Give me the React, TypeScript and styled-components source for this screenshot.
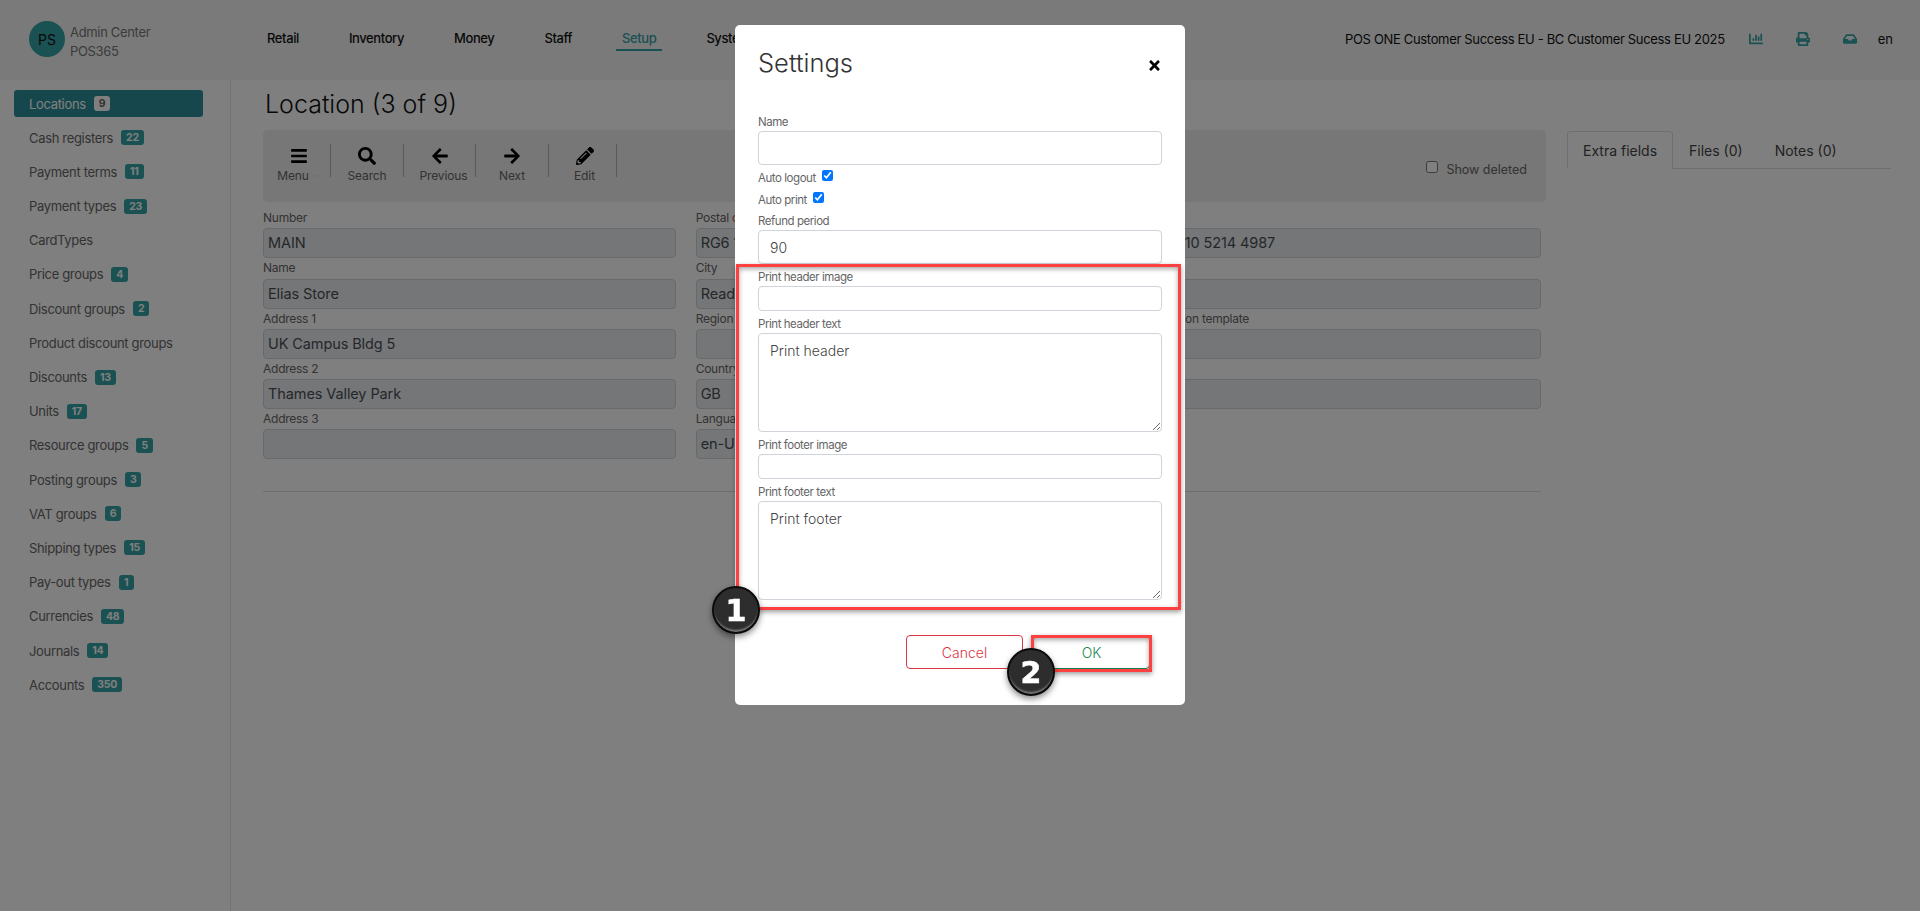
import React from "react";
import styled, { createGlobalStyle } from "styled-components";
import {
  FaBars,
  FaSearch,
  FaArrowLeft,
  FaArrowRight,
  FaPencilAlt,
  FaChartBar,
  FaPrint,
  FaInbox,
  FaTimes,
} from "react-icons/fa";

const TEAL = "#34a2a5";
const FONT = `Inter, "Liberation Sans", sans-serif`;

const Global = createGlobalStyle`
  html, body { margin: 0; height: 100%; background: #fff; overflow: hidden; }
  body { font-family: ${FONT}; font-size: 13px; color: #222; }
  * { box-sizing: border-box; }
`;

const Page = styled.div`
  width: 1920px;
  height: 911px;
  display: flex;
  flex-direction: column;
`;

const Header = styled.header`
  height: 80px;
  flex: none;
  background: #f5f5f5;
  display: flex;
  align-items: center;
  padding: 0 27px 2px 29px;
`;

const Brand = styled.div`
  display: flex;
  align-items: center;
  gap: 5px;
  width: 232px;
`;

const Avatar = styled.div`
  width: 36px;
  height: 36px;
  border-radius: 50%;
  background: ${TEAL};
  color: #111;
  font-size: 14px;
  display: flex;
  align-items: center;
  justify-content: center;
`;

const BrandText = styled.div`
  color: #777;
  font-size: 13px;
  line-height: 19px;
  letter-spacing: -0.33px;
  padding-top: 5px;
`;

const Nav = styled.nav`
  display: flex;
  gap: 38px;
`;

const NavItem = styled.a<{ $active?: boolean }>`
  padding: 0 6px;
  height: 22px;
  line-height: 18px;
  margin-top: 2px;
  font-size: 13px;
  font-weight: 500;
  letter-spacing: -0.4px;
  color: ${(p) => (p.$active ? TEAL : "#111")};
  border-bottom: 2px solid ${(p) => (p.$active ? TEAL : "transparent")};
`;

const HeaderRight = styled.div`
  margin-left: auto;
  display: flex;
  align-items: center;
  font-size: 13px;
  color: #111;
`;

const Org = styled.span`
  margin-right: 24px;
  letter-spacing: -0.33px;
`;

const TopIcon = styled.span<{ $gap: number }>`
  color: ${TEAL};
  display: flex;
  font-size: 14px;
  margin-right: ${(p) => p.$gap}px;
`;

const Body = styled.div`
  flex: 1;
  display: flex;
  min-height: 0;
`;

const Sidebar = styled.aside`
  width: 231px;
  flex: none;
  border-right: 1px solid #e4e4e4;
  padding: 10px 27px 0 14px;
  display: flex;
  flex-direction: column;
  gap: 7.2px;
`;

const SideItem = styled.a<{ $active?: boolean }>`
  height: 27px;
  flex: none;
  padding-left: 15px;
  border-radius: 3px;
  display: flex;
  align-items: center;
  gap: 8px;
  font-size: 13px;
  letter-spacing: -0.33px;
  color: ${(p) => (p.$active ? "#fff" : "#666")};
  background: ${(p) => (p.$active ? "#2c8f98" : "transparent")};
`;

const Badge = styled.span<{ $active?: boolean }>`
  height: 15px;
  min-width: 15px;
  padding: 0 5px;
  border-radius: 3px;
  font-size: 10.5px;
  font-weight: 700;
  line-height: 15px;
  text-align: center;
  letter-spacing: -0.3px;
  background: ${(p) => (p.$active ? "#fff" : TEAL)};
  color: ${(p) => (p.$active ? "#666" : "#fff")};
`;

const Content = styled.main`
  flex: none;
  width: 1283px;
  margin-left: 32px;
`;

const Title = styled.h1`
  margin: 0;
  height: 50px;
  line-height: 48px;
  font-size: 25px;
  font-weight: 300;
  color: #111;
  padding-left: 2px;
`;

const Toolbar = styled.div`
  height: 72px;
  background: #eeeeee;
  border-radius: 5px;
  display: flex;
  padding: 14px 19px 0 5px;
`;

const ToolButton = styled.div<{ $w: number; $pad?: number }>`
  width: ${(p) => p.$w}px;
  height: 33px;
  padding-left: ${(p) => p.$pad ?? 0}px;
  border-right: 1px solid #b5b5b5;
  display: flex;
  flex-direction: column;
  align-items: center;
  color: #111;
`;

const ToolIcon = styled.span`
  height: 23px;
  flex: none;
  display: flex;
  align-items: center;
  font-size: 18px;
  color: #000;
`;

const ToolLabel = styled.span<{ $shift?: number }>`
  font-size: 12px;
  line-height: 18px;
  letter-spacing: -0.1px;
  color: #666;
  white-space: nowrap;
  margin-left: ${(p) => p.$shift ?? 0}px;
  display: flex;
  flex: none;
  align-items: center;
`;

const Caret = styled.i`
  width: 8px;
  height: 0;
  margin-left: 4px;
  border-top: 3px solid #e6e6e6;
  border-left: 4px solid transparent;
  border-right: 4px solid transparent;
`;

const ShowDeleted = styled.label`
  margin-left: auto;
  margin-top: 15px;
  height: 20px;
  display: flex;
  align-items: center;
  gap: 8px;
  font-size: 12.5px;
  color: #666;
`;

const SmallCheck = styled.input`
  width: 12px;
  height: 12px;
  margin: -4px 0 0;
`;

const FormGrid = styled.div`
  margin: 6px 5px 0 0;
  display: grid;
  grid-template-columns: repeat(3, 1fr);
  column-gap: 20px;
  row-gap: 0;
`;

const RoField = styled.div``;

const RoLabel = styled.div`
  height: 20.25px;
  line-height: 20px;
  font-size: 12px;
  letter-spacing: -0.25px;
  color: #666;
  white-space: nowrap;
`;

const RoMark = styled.span`
  color: #c0533c;
`;

const RoInput = styled.div`
  height: 30px;
  border: 1px solid #ced4da;
  border-radius: 4px;
  background: #e9ecef;
  color: #495057;
  font-size: 14.5px;
  letter-spacing: -0.1px;
  line-height: 28px;
  padding: 0 4px;
  white-space: nowrap;
`;

const Rule = styled.hr`
  margin: 32px 5px 0 0;
  border: 0;
  border-top: 1px solid #ddd;
`;

const Side = styled.section`
  margin: 51px 0 0 21px;
  width: 324px;
  height: 38px;
  display: flex;
  border-bottom: 1px solid #ddd;
`;

const Tab = styled.a<{ $active?: boolean }>`
  height: 38px;
  padding: 0 15px;
  line-height: 38px;
  font-size: 14px;
  color: #444;
  border: 1px solid ${(p) => (p.$active ? "#ddd" : "transparent")};
  border-bottom-color: ${(p) => (p.$active ? "#fff" : "transparent")};
  border-radius: 4px 4px 0 0;
`;

const Overlay = styled.div`
  position: fixed;
  inset: 0;
  background: rgba(0, 0, 0, 0.5);
  display: flex;
  justify-content: center;
  align-items: flex-start;
  padding-top: 25px;
`;

const Modal = styled.div`
  position: relative;
  width: 450px;
  height: 680px;
  background: #fff;
  border-radius: 5px;
  padding: 0 23px;
  display: flex;
  flex-direction: column;
`;

const ModalHead = styled.div`
  height: 84px;
  display: flex;
  justify-content: space-between;
  flex: none;
`;

const ModalTitle = styled.h2`
  margin: 18px 0 0;
  font-size: 25.5px;
  line-height: 40px;
  font-weight: 300;
  color: #333;
`;

const Close = styled.button`
  margin: 33px 0 0 0;
  padding: 0;
  height: 16px;
  border: 0;
  background: transparent;
  color: #000;
  font-size: 15px;
  display: flex;
`;

const Field = styled.div`
  margin-top: 4px;
  flex: none;
`;

const Label = styled.label`
  display: block;
  height: 16px;
  line-height: 18px;
  margin-bottom: 2px;
  font-size: 11.5px;
  letter-spacing: -0.45px;
  color: #666;
`;

const TextInput = styled.input<{ $h: number }>`
  display: block;
  width: 100%;
  height: ${(p) => p.$h}px;
  padding: 0 11px;
  border: 1px solid #ced4da;
  border-radius: 4px;
  background: #fff;
  font-family: inherit;
  font-size: 14px;
  font-weight: 300;
  color: #444;
  outline: none;
`;

const TextArea = styled.textarea<{ $h: number }>`
  display: block;
  width: 100%;
  height: ${(p) => p.$h}px;
  padding: 6px 11px;
  border: 1px solid #ced4da;
  border-radius: 4px;
  font-family: inherit;
  font-size: 14px;
  font-weight: 300;
  line-height: 22px;
  color: #444;
  outline: none;
`;

const CheckRow = styled.label`
  display: flex;
  height: 16px;
  margin-top: 4px;
  margin-bottom: 1px;
  font-size: 11.5px;
  letter-spacing: -0.45px;
  line-height: 18px;
  color: #666;
  gap: 6px;
  & + & { margin-top: 5px; }
`;

const Check = styled.input`
  width: 11px;
  height: 11px;
  margin: 1px 0 0;
`;

const Footer = styled.div`
  margin-top: 35px;
  padding-right: 12px;
  display: flex;
  justify-content: flex-end;
  gap: 10px;
`;

const ActionButton = styled.button<{ $tone: string; $w: number }>`
  width: ${(p) => p.$w}px;
  height: 34px;
  background: #fff;
  border: 1px solid ${(p) => p.$tone};
  border-radius: 4px;
  color: ${(p) => p.$tone};
  font-family: inherit;
  font-size: 14px;
  font-weight: 300;
`;

const Highlight = styled.div<{ $x: number; $y: number; $w: number; $h: number }>`
  position: absolute;
  left: ${(p) => p.$x}px;
  top: ${(p) => p.$y}px;
  width: ${(p) => p.$w}px;
  height: ${(p) => p.$h}px;
  border: 3.5px solid #ff4040;
  pointer-events: none;
  box-shadow: 0 2px 5px rgba(0, 0, 0, 0.4), inset 0 2px 5px rgba(0, 0, 0, 0.35);
`;

const Step = styled.div<{ $x: number; $y: number }>`
  position: absolute;
  left: ${(p) => p.$x - 24}px;
  top: ${(p) => p.$y - 24}px;
  width: 48px;
  height: 48px;
  border-radius: 50%;
  background: #2d2d2d;
  border: 2px solid #0b0b0b;
  box-shadow: 0 3px 6px rgba(0, 0, 0, 0.45), inset 0 -3px 2px -1px #7b7b7b;
  color: #fff;
  font-family: "DejaVu Sans", sans-serif;
  font-size: 30px;
  font-weight: 700;
  line-height: 46px;
  text-align: center;
  -webkit-text-stroke: 0.6px #fff;
`;

const sideItems: [string, string?][] = [
  ["Locations", "9"],
  ["Cash registers", "22"],
  ["Payment terms", "11"],
  ["Payment types", "23"],
  ["CardTypes"],
  ["Price groups", "4"],
  ["Discount groups", "2"],
  ["Product discount groups"],
  ["Discounts", "13"],
  ["Units", "17"],
  ["Resource groups", "5"],
  ["Posting groups", "3"],
  ["VAT groups", "6"],
  ["Shipping types", "15"],
  ["Pay-out types", "1"],
  ["Currencies", "48"],
  ["Journals", "14"],
  ["Accounts", "350"],
];

const fields: [React.ReactNode, string][] = [
  ["Number", "MAIN"],
  [<>Postal <RoMark>code</RoMark></>, "RG6 1WG"],
  ["Phone", "+44 (0)10 5214 4987"],
  ["Name", "Elias Store"],
  ["City", "Reading"],
  ["Email", ""],
  ["Address 1", "UK Campus Bldg 5"],
  ["Region", ""],
  ["Confirmation template", ""],
  ["Address 2", "Thames Valley Park"],
  ["Country", "GB"],
  ["Contact", ""],
  ["Address 3", ""],
  ["Language", "en-US"],
  ["", ""],
];

export default function App() {
  return (
    <>
      <Global />
      <Page>
        <Header>
          <Brand>
            <Avatar>PS</Avatar>
            <BrandText>
              Admin Center
              <br />
              POS365
            </BrandText>
          </Brand>
          <Nav>
            <NavItem>Retail</NavItem>
            <NavItem>Inventory</NavItem>
            <NavItem>Money</NavItem>
            <NavItem>Staff</NavItem>
            <NavItem $active>Setup</NavItem>
            <NavItem>System</NavItem>
          </Nav>
          <HeaderRight>
            <Org>POS ONE Customer Success EU - BC Customer Sucess EU 2025</Org>
            <TopIcon $gap={33}><FaChartBar /></TopIcon>
            <TopIcon $gap={33}><FaPrint /></TopIcon>
            <TopIcon $gap={21}><FaInbox /></TopIcon>
            <span>en</span>
          </HeaderRight>
        </Header>
        <Body>
          <Sidebar>
            {sideItems.map(([name, count], i) => (
              <SideItem key={name} $active={i === 0}>
                {name}
                {count && <Badge $active={i === 0}>{count}</Badge>}
              </SideItem>
            ))}
          </Sidebar>
          <Content>
            <Title>Location (3 of 9)</Title>
            <Toolbar>
              <ToolButton $w={63}>
                <ToolIcon><FaBars /></ToolIcon>
                <ToolLabel>Menu<Caret /></ToolLabel>
              </ToolButton>
              <ToolButton $w={73}>
                <ToolIcon><FaSearch /></ToolIcon>
                <ToolLabel>Search</ToolLabel>
              </ToolButton>
              <ToolButton $w={72}>
                <ToolIcon><FaArrowLeft /></ToolIcon>
                <ToolLabel $shift={8}>Previous</ToolLabel>
              </ToolButton>
              <ToolButton $w={73}>
                <ToolIcon><FaArrowRight /></ToolIcon>
                <ToolLabel>Next</ToolLabel>
              </ToolButton>
              <ToolButton $w={68} $pad={4}>
                <ToolIcon><FaPencilAlt /></ToolIcon>
                <ToolLabel>Edit</ToolLabel>
              </ToolButton>
              <ShowDeleted>
                <SmallCheck type="checkbox" />
                Show deleted
              </ShowDeleted>
            </Toolbar>
            <FormGrid>
              {fields.map(([label, value], i) =>
                label ? (
                  <RoField key={i}>
                    <RoLabel>{label}</RoLabel>
                    <RoInput>{value}</RoInput>
                  </RoField>
                ) : (
                  <RoField key={i} />
                )
              )}
            </FormGrid>
            <Rule />
          </Content>
          <Side>
            <Tab $active>Extra fields</Tab>
            <Tab>Files (0)</Tab>
            <Tab>Notes (0)</Tab>
          </Side>
        </Body>
      </Page>
      <Overlay>
        <Modal>
          <ModalHead>
            <ModalTitle>Settings</ModalTitle>
            <Close aria-label="Close"><FaTimes /></Close>
          </ModalHead>
          <Field>
            <Label>Name</Label>
            <TextInput $h={34} />
          </Field>
          <CheckRow>Auto logout <Check type="checkbox" defaultChecked /></CheckRow>
          <CheckRow>Auto print <Check type="checkbox" defaultChecked /></CheckRow>
          <Field>
            <Label>Refund period</Label>
            <TextInput $h={34} defaultValue="90" />
          </Field>
          <Field>
            <Label>Print header image</Label>
            <TextInput $h={25} />
          </Field>
          <Field>
            <Label>Print header text</Label>
            <TextArea $h={99} defaultValue="Print header" />
          </Field>
          <Field>
            <Label>Print footer image</Label>
            <TextInput $h={25} />
          </Field>
          <Field>
            <Label>Print footer text</Label>
            <TextArea $h={99} defaultValue="Print footer" />
          </Field>
          <Footer>
            <ActionButton $tone="#dc3545" $w={117}>Cancel</ActionButton>
            <ActionButton $tone="#198754" $w={117}>OK</ActionButton>
          </Footer>
          <Highlight $x={1} $y={239} $w={445} $h={346} />
          <Highlight $x={296} $y={610} $w={121} $h={37} />
          <Step $x={1} $y={585}>1</Step>
          <Step $x={296} $y={647}>2</Step>
        </Modal>
      </Overlay>
    </>
  );
}
